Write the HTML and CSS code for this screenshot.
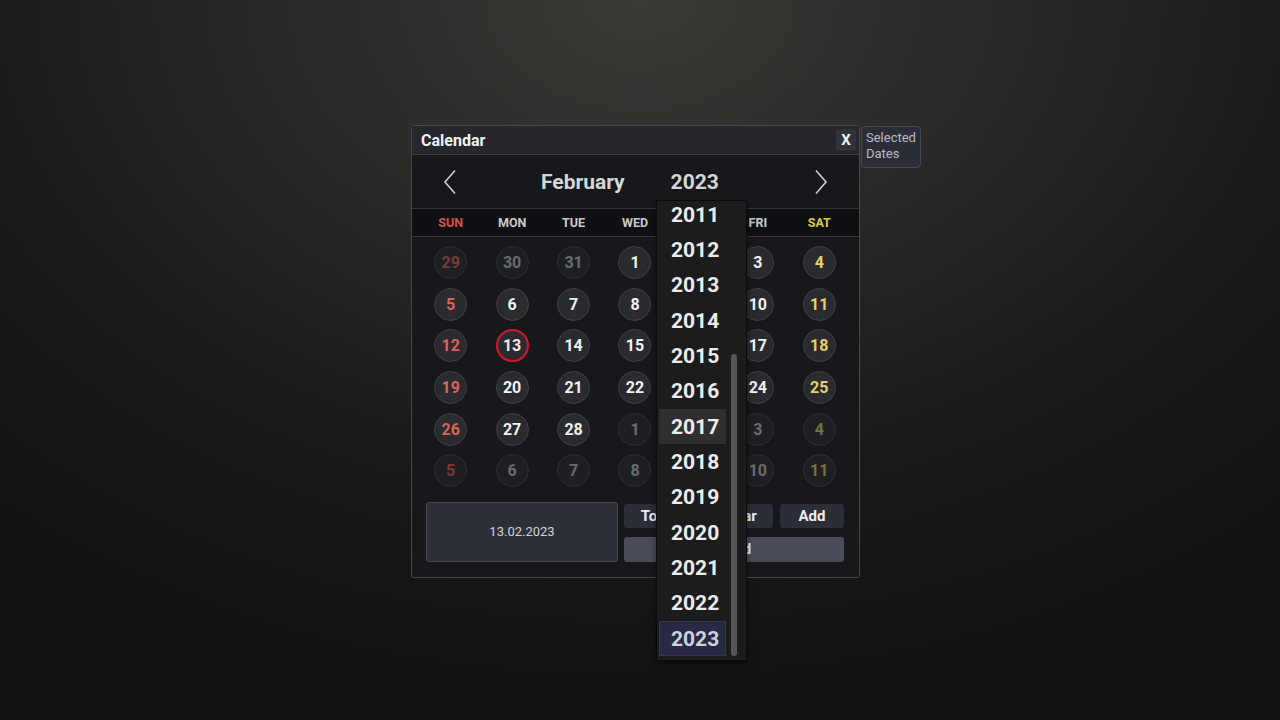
FILE: index.html
```html
<!DOCTYPE html>
<html lang="en">
<head>
    <meta charset="UTF-8">
    <meta name="viewport" content="width=device-width, initial-scale=1.0">
    <title>Calendar</title>
    <link rel="stylesheet" href="styles.css">
</head>
<body>
    <div class="stage">
        <div class="calendar">
            <div class="cal-title">
                <span>Calendar</span>
                <button class="close-btn">X</button>
            </div>

            <div class="cal-header">
                <svg class="chevron" viewBox="0 0 14 26" width="14" height="26">
                    <path d="M12 1.5 L2 13 L12 24.5" fill="none" stroke="#cfcfcf" stroke-width="1.6"/>
                </svg>
                <span class="month">February</span>
                <span class="year">2023</span>
                <svg class="chevron next" viewBox="0 0 14 26" width="14" height="26">
                    <path d="M2 1.5 L12 13 L2 24.5" fill="none" stroke="#cfcfcf" stroke-width="1.6"/>
                </svg>
            </div>

            <div class="weekdays">
                <span class="sun">SUN</span>
                <span>MON</span>
                <span>TUE</span>
                <span>WED</span>
                <span>THU</span>
                <span>FRI</span>
                <span class="sat">SAT</span>
            </div>

            <div class="days">
                <div class="cell"><span class="day out sun">29</span></div>
                <div class="cell"><span class="day out">30</span></div>
                <div class="cell"><span class="day out">31</span></div>
                <div class="cell"><span class="day">1</span></div>
                <div class="cell"><span class="day">2</span></div>
                <div class="cell"><span class="day">3</span></div>
                <div class="cell"><span class="day sat">4</span></div>

                <div class="cell"><span class="day sun">5</span></div>
                <div class="cell"><span class="day">6</span></div>
                <div class="cell"><span class="day">7</span></div>
                <div class="cell"><span class="day">8</span></div>
                <div class="cell"><span class="day">9</span></div>
                <div class="cell"><span class="day">10</span></div>
                <div class="cell"><span class="day sat">11</span></div>

                <div class="cell"><span class="day sun">12</span></div>
                <div class="cell"><span class="day today">13</span></div>
                <div class="cell"><span class="day">14</span></div>
                <div class="cell"><span class="day">15</span></div>
                <div class="cell"><span class="day">16</span></div>
                <div class="cell"><span class="day">17</span></div>
                <div class="cell"><span class="day sat">18</span></div>

                <div class="cell"><span class="day sun">19</span></div>
                <div class="cell"><span class="day">20</span></div>
                <div class="cell"><span class="day">21</span></div>
                <div class="cell"><span class="day">22</span></div>
                <div class="cell"><span class="day">23</span></div>
                <div class="cell"><span class="day">24</span></div>
                <div class="cell"><span class="day sat">25</span></div>

                <div class="cell"><span class="day sun">26</span></div>
                <div class="cell"><span class="day">27</span></div>
                <div class="cell"><span class="day">28</span></div>
                <div class="cell"><span class="day out">1</span></div>
                <div class="cell"><span class="day out">2</span></div>
                <div class="cell"><span class="day out">3</span></div>
                <div class="cell"><span class="day out sat">4</span></div>

                <div class="cell"><span class="day out sun">5</span></div>
                <div class="cell"><span class="day out">6</span></div>
                <div class="cell"><span class="day out">7</span></div>
                <div class="cell"><span class="day out">8</span></div>
                <div class="cell"><span class="day out">9</span></div>
                <div class="cell"><span class="day out">10</span></div>
                <div class="cell"><span class="day out sat">11</span></div>
            </div>

            <div class="cal-footer">
                <div class="date-box">13.02.2023</div>
                <div class="actions">
                    <div class="action-row">
                        <button class="btn btn-today">Today</button>
                        <button class="btn btn-clear">Clear</button>
                        <button class="btn btn-add">Add</button>
                    </div>
                    <button class="btn btn-wide">Send</button>
                </div>
            </div>

            <!-- year picker, opened -->
            <div class="year-dropdown">
                <ul class="year-list">
                    <li>2011</li>
                    <li>2012</li>
                    <li>2013</li>
                    <li>2014</li>
                    <li>2015</li>
                    <li>2016</li>
                    <li class="hover">2017</li>
                    <li>2018</li>
                    <li>2019</li>
                    <li>2020</li>
                    <li>2021</li>
                    <li>2022</li>
                    <li class="selected">2023</li>
                </ul>
                <div class="scroll-thumb"></div>
            </div>
        </div>

        <div class="selected-tab">Selected<br>Dates</div>
    </div>
</body>
</html>
```

FILE: styles.css
```css
:root {
    --panel-border: #45474c;
    --title-bg: #25272c;
    --body-bg: #17181c;
    --row-bg: #0f1013;
    --text-color: #eeeeee;
    --sun-color: #df6259;
    --sat-color: #e4d16a;
}

* {
    margin: 0;
    padding: 0;
    box-sizing: border-box;
    font-family: Roboto, "Liberation Sans", sans-serif;
}

html, body {
    height: 100%;
}

body {
    background: radial-gradient(ellipse 75% 95% at 50% 0%, #3b3936 0%, #292826 40%, #191817 75%, #121211 100%);
    color: var(--text-color);
    overflow: hidden;
}

.stage {
    display: flex;
    align-items: flex-start;
    padding: 125px 0 0 411px;
}

.calendar {
    position: relative;
    width: 449px;
    background: var(--body-bg);
    border: 1px solid var(--panel-border);
    border-radius: 3px;
}

.cal-title {
    height: 29px;
    display: flex;
    align-items: center;
    justify-content: space-between;
    padding: 0 3px 0 9px;
    background: var(--title-bg);
    border-bottom: 1px solid #3b3d42;
    font-size: 16px;
    font-weight: bold;
    color: #f2f2f2;
}

.close-btn {
    width: 20px;
    height: 22px;
    border: none;
    border-radius: 3px;
    background: #31333a;
    color: #f4f4f4;
    font-size: 15px;
    font-weight: bold;
}

.cal-header {
    height: 53px;
    display: flex;
    align-items: center;
    padding: 0 31px 0 31px;
    font-size: 21px;
    font-weight: bold;
    color: #d6d6d6;
}

.month {
    margin-left: 84px;
}

.year {
    margin-left: 46px;
}

.chevron.next {
    margin-left: auto;
}

.weekdays {
    height: 29px;
    display: grid;
    grid-template-columns: repeat(7, 1fr);
    align-items: center;
    padding: 0 9px 0 8px;
    background: var(--row-bg);
    border-top: 1px solid #34363b;
    border-bottom: 1px solid #34363b;
    font-size: 12.5px;
    font-weight: bold;
    color: #c9c9cc;
    text-align: center;
}

.weekdays .sun {
    color: #d8504c;
}

.weekdays .sat {
    color: #d9c94c;
}

.days {
    display: grid;
    grid-template-columns: repeat(7, 1fr);
    grid-auto-rows: 41.6px;
    padding: 5px 9px 0 8px;
}

.cell {
    display: flex;
    align-items: center;
    justify-content: center;
}

.day {
    width: 33px;
    height: 33px;
    display: flex;
    align-items: center;
    justify-content: center;
    border-radius: 50%;
    background: #2a2b2f;
    border: 1px solid #404145;
    font-size: 16px;
    font-weight: bold;
    color: #f2f2f2;
}

.day.sun {
    color: var(--sun-color);
}

.day.sat {
    color: var(--sat-color);
}

.day.out {
    background: #1e1f23;
    border-color: #2e2f33;
    color: #6c6c6f;
}

.day.out.sun {
    color: #7a3a38;
}

.day.out.sat {
    color: #78713e;
}

.day.today {
    border: 2px solid #d8152b;
    color: #fce4e6;
}

.cal-footer {
    display: flex;
    gap: 6px;
    padding: 10px 15px 15px 14px;
}

.date-box {
    width: 193px;
    height: 60px;
    display: flex;
    align-items: center;
    justify-content: center;
    background: #2d2f38;
    border: 1px solid #464851;
    border-radius: 3px;
    font-size: 13px;
    color: #d2d2d6;
}

.actions {
    flex: 1;
    display: flex;
    flex-direction: column;
    gap: 9px;
    margin-top: 2px;
}

.action-row {
    display: flex;
    gap: 7px;
}

.btn {
    height: 24px;
    border: none;
    border-radius: 3px;
    background: #2c2e37;
    color: #ededed;
    font-size: 15px;
    font-weight: bold;
}

.btn-today {
    width: 74px;
}

.btn-clear {
    width: 68px;
}

.btn-add {
    width: 64px;
}

.btn-wide {
    height: 25px;
    background: #4a4c5a;
}

.year-dropdown {
    position: absolute;
    left: 244px;
    top: 74px;
    width: 91px;
    height: 461px;
    background: #1c1c1d;
    border: 1px solid #0b0b0b;
    overflow: hidden;
    box-shadow: 0 2px 6px rgba(0, 0, 0, 0.5);
}

.year-list {
    list-style: none;
    margin: -4px 0 0 2px;
    width: 67px;
}

.year-list li {
    height: 35.33px;
    display: flex;
    align-items: center;
    padding-left: 12px;
    font-size: 21px;
    font-weight: bold;
    color: #ececec;
}

.year-list li.hover {
    background: #2f2f31;
}

.year-list li.selected {
    background: #272a42;
    outline: 1px dotted #8c2233;
    outline-offset: -1px;
    color: #cfd1dc;
}

.scroll-thumb {
    position: absolute;
    left: 74px;
    top: 153px;
    width: 6px;
    height: 302px;
    border-radius: 3px;
    background: #565657;
}

.selected-tab {
    width: 60px;
    height: 42px;
    margin: 1px 0 0 1px;
    padding: 3px 0 0 4px;
    background: #2a2d36;
    border: 1px solid #454852;
    border-radius: 4px;
    font-size: 13px;
    line-height: 16px;
    color: #b9bcc6;
}
```
